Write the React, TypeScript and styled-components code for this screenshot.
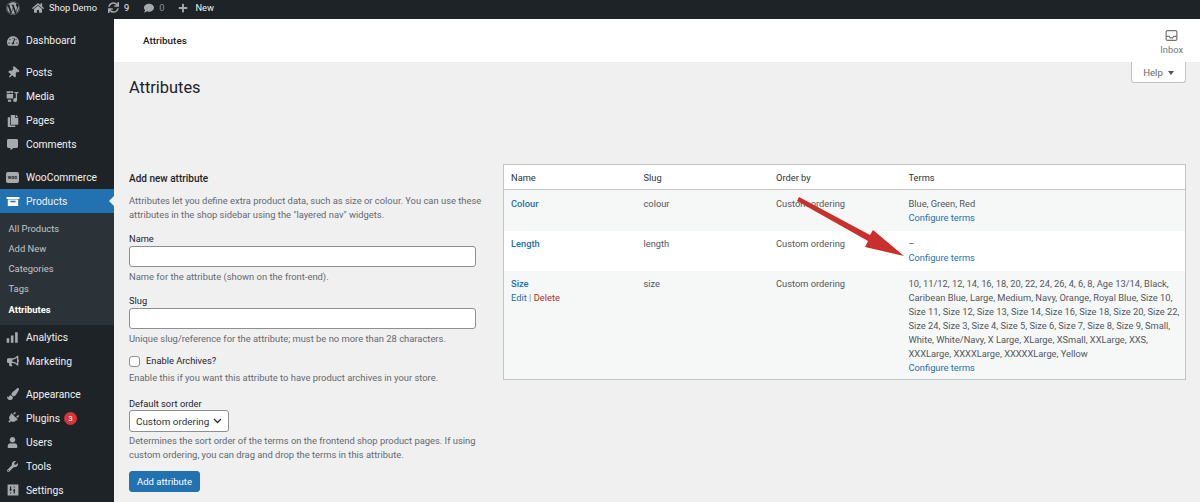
import React from 'react';
import styled, { createGlobalStyle } from 'styled-components';
import {
  FaWordpress, FaHome, FaSync, FaComment, FaPlus, FaTachometerAlt, FaThumbtack, FaCopy,
  FaCommentAlt, FaBullhorn, FaPaintBrush, FaPlug, FaUser, FaWrench,
} from 'react-icons/fa';

const Global = createGlobalStyle`
  html, body { margin: 0; padding: 0; height: 502px; overflow: hidden; background: #f0f0f1; }
  * { box-sizing: border-box; }
  body { font-family: Roboto, "Noto Sans", Arial, sans-serif; font-size: 10px; color: #3c434a; }
`;

const Page = styled.div`position: relative; width: 1200px; height: 502px; display: flex; flex-direction: column; overflow: hidden;`;

const AdminBar = styled.div`height: 19px; flex: none; background: #1d2327; color: #f0f0f1; display: flex; align-items: center; padding: 0 0 4px 6px; font-size: 9.300px;`;
const BarItem = styled.div<{ $gap?: number; $inner?: number; $dim?: boolean }>`display: flex; align-items: center; gap: ${p => p.$inner ?? 5}px; margin-right: ${p => p.$gap ?? 11}px; color: ${p => (p.$dim ? '#8c8f94' : '#f0f0f1')}; svg { color: #a7aaad; }`;

const Body = styled.div`flex: 1; display: flex; min-height: 0;`;

const Sidebar = styled.nav`width: 114px; flex: none; background: #1d2327; padding-top: 10px; display: flex; flex-direction: column;`;
const MenuItem = styled.div<{ $active?: boolean; $sep?: number }>`
  position: relative;
  height: 24.5px;
  margin-top: ${p => p.$sep ?? 0}px;
  display: flex;
  align-items: center;
  gap: 7px;
  padding-left: 6px;
  font-size: 10.300px;
  color: #f0f0f1;
  background: ${p => (p.$active ? '#2271b1' : 'transparent')};
  svg { color: ${p => (p.$active ? '#fff' : '#a7aaad')}; flex: none; }
  ${p => p.$active && `&::after { content: ''; position: absolute; right: 0; top: 7px; border: 5.5px solid transparent; border-right-color: #f0f0f1; border-left-width: 0; }`}
`;
const IconSlot = styled.span`width: 13px; height: 13px; flex: none; display: flex; align-items: center; justify-content: center;`;
const WooBadge = styled.span`width: 14px; height: 11px; border-radius: 2px; background: #a7aaad; color: #1d2327; font-size: 5px; font-weight: 700; display: flex; align-items: center; justify-content: center;`;
const Submenu = styled.div`background: #2c3338; padding: 5px 0 6px; display: flex; flex-direction: column;`;
const SubItem = styled.div<{ $current?: boolean }>`height: 20.2px; display: flex; align-items: center; padding-left: 8.500px; font-size: 9.400px; color: ${p => (p.$current ? '#fff' : '#c3c4c7')}; font-weight: ${p => (p.$current ? 700 : 400)};`;
const Count = styled.span`width: 13px; height: 13px; border-radius: 50%; background: #d63638; color: #fff; font-size: 8px; display: flex; align-items: center; justify-content: center; margin-left: -3px;`;

const Main = styled.main`flex: 1; min-width: 0; display: flex; flex-direction: column;`;
const Header = styled.header`height: 43px; flex: none; background: #fff; display: flex; align-items: center; justify-content: space-between; padding: 0 17px 0 29px;`;
const HeaderTitle = styled.div`font-size: 9.900px; font-weight: 500; color: #1d2327;`;
const Inbox = styled.div`display: flex; flex-direction: column; align-items: center; gap: 2px; color: #757575; font-size: 9.300px; padding-top: 2px;`;
const HelpRow = styled.div`height: 21px; flex: none; display: flex; justify-content: flex-end; padding-right: 14px;`;
const HelpTab = styled.div`width: 55px; height: 21px; background: #fff; border: 1px solid #c3c4c7; border-top: 0; border-radius: 0 0 3px 3px; display: flex; align-items: center; justify-content: center; gap: 5px; font-size: 9.600px; color: #646970; i { border: 3.5px solid transparent; border-top: 4.5px solid #50575e; border-bottom: 0; margin-top: 1px; }`;
const Content = styled.div`flex: 1; padding: 0 14px 0 15px; min-height: 0;`;
const H1 = styled.h1`margin: -6px 0 0; height: 87px; font-size: 16.400px; line-height: 22px; font-weight: 400; color: #1d2327;`;
const Columns = styled.div`display: flex; align-items: flex-start; gap: 27px;`;

const Form = styled.form`width: 347px; flex: none; padding-top: 8px;`;
const FormTitle = styled.h2`margin: 0 0 8px; font-size: 10px; line-height: 14px; font-weight: 500; color: #1d2327;`;
const Hint = styled.p<{ $top?: number }>`margin: ${p => p.$top ?? 0}px 0 0; font-size: 9.400px; line-height: 14px; color: #646970; white-space: nowrap;`;
const Field = styled.div<{ $top: number }>`margin-top: ${p => p.$top}px;`;
const Label = styled.label`display: block; font-size: 9.300px; line-height: 16px; color: #1d2327;`;
const TextInput = styled.div`height: 21px; margin-top: -1px; background: #fff; border: 1px solid #8c8f94; border-radius: 3px;`;
const CheckRow = styled.div`display: flex; align-items: center; gap: 6px; font-size: 9.300px; line-height: 14px; color: #1d2327;`;
const Check = styled.span`width: 11px; height: 11px; background: #fff; border: 1px solid #8c8f94; border-radius: 3px;`;
const Select = styled.div`width: 100px; height: 22px; margin-top: -2px; background: #fff; border: 1px solid #8c8f94; border-radius: 3px; display: flex; align-items: center; justify-content: space-between; padding: 0 6px; font-size: 9.900px; color: #2c3338; white-space: nowrap; svg { flex: none; }`;
const SubmitButton = styled.button`display: block; width: 71px; height: 21px; padding: 0; background: #2271b1; border: 1px solid #2271b1; border-radius: 3px; color: #fff; font: inherit; font-size: 9.500px;`;

const Table = styled.table`flex: 1; border-collapse: collapse; table-layout: fixed; width: 683px; border: 1px solid #c3c4c7; background: #fff; font-size: 9.300px; line-height: 14px;`;
const Th = styled.th<{ $w?: number }>`width: ${p => (p.$w ? `${p.$w}px` : 'auto')}; height: 25px; padding: 1px 7px 0; text-align: left; font-weight: 400; color: #2c3338; border-bottom: 1px solid #c3c4c7;`;
const Row = styled.tr<{ $alt?: boolean; $h: number }>`height: ${p => p.$h}px; background: ${p => (p.$alt ? '#f6f7f7' : '#fff')};`;
const Td = styled.td`padding: 6.500px 7px 0; vertical-align: top; color: #50575e;`;
const NameLink = styled.a`display: block; color: #2271b1; font-weight: 500;`;
const Link = styled.a`color: #2271b1;`;
const DeleteLink = styled.a`color: #b32d2e;`;
const Sep = styled.span`color: #8c8f94;`;
const TermLine = styled.div`white-space: nowrap;`;
const Arrow = styled.svg`position: absolute; left: 790px; top: 190px; pointer-events: none;`;

const Media = () => (
  <svg width="13" height="13" viewBox="0 0 20 20" fill="currentColor"><path d="M1 2h10v3H8.500L7 3.500 5.500 5H1zM1 6h10v7H1zM3 15h5v3H3zM13 3h6v2h-2v10.500a3 3 0 1 1-2-2.800V5h-2z" /></svg>
);
const Box = () => (
  <svg width="14" height="13" viewBox="0 0 20 20" fill="currentColor"><path d="M0 3h20v3H0zM2 7h16v10H2zM6 9v2h8V9z" fillRule="evenodd" /></svg>
);
const Bars = () => (
  <svg width="13" height="13" viewBox="0 0 20 20" fill="currentColor"><path d="M1 11h4v7H1zM7.500 7h4v11h-4zM14 2h4v16h-4z" /></svg>
);
const Sliders = () => (
  <svg width="12" height="12" viewBox="0 0 20 20" fill="currentColor"><path fillRule="evenodd" d="M1 1h18v18H1zM5 4v5H3.500L6 12l2.500-3H7V4zm0 10v2h2v-2zm8 2v-5h1.500L12 8 9.500 11H11v5zm0-10V4h-2v2z" /></svg>
);
const InboxIcon = () => (
  <svg width="13" height="13" viewBox="0 0 17 16" fill="none" stroke="#757575" strokeWidth="1.600"><rect x="1.500" y="1.500" width="14" height="13" rx="2" /><path d="M1.500 9h4l1.500 2h3l1.500-2h4" /></svg>
);
const Chevron = () => (
  <svg width="9" height="6" viewBox="0 0 9 6" fill="none" stroke="#2c3338" strokeWidth="1.300"><path d="M1 1l3.500 3.500L8 1" /></svg>
);

type Item = { label: string; icon: React.ReactNode; sep?: number; count?: number };

const topItems: Item[] = [
  { label: 'Dashboard', icon: <FaTachometerAlt size={12} /> },
  { label: 'Posts', icon: <FaThumbtack size={12} style={{ transform: 'rotate(40deg)' }} />, sep: 8 },
  { label: 'Media', icon: <Media /> },
  { label: 'Pages', icon: <FaCopy size={12} /> },
  { label: 'Comments', icon: <FaCommentAlt size={11} /> },
  { label: 'WooCommerce', icon: <WooBadge>woo</WooBadge>, sep: 8.5 },
];
const bottomItems: Item[] = [
  { label: 'Analytics', icon: <Bars /> },
  { label: 'Marketing', icon: <FaBullhorn size={12} /> },
  { label: 'Appearance', icon: <FaPaintBrush size={12} />, sep: 9 },
  { label: 'Plugins', icon: <FaPlug size={12} style={{ transform: 'rotate(45deg)' }} />, count: 3 },
  { label: 'Users', icon: <FaUser size={11} /> },
  { label: 'Tools', icon: <FaWrench size={11} /> },
  { label: 'Settings', icon: <Sliders /> },
];
const subItems = ['All Products', 'Add New', 'Categories', 'Tags', 'Attributes'];
const sizeTerms = [
  '10, 11/12, 12, 14, 16, 18, 20, 22, 24, 26, 4, 6, 8, Age 13/14, Black,',
  'Caribean Blue, Large, Medium, Navy, Orange, Royal Blue, Size 10,',
  'Size 11, Size 12, Size 13, Size 14, Size 16, Size 18, Size 20, Size 22,',
  'Size 24, Size 3, Size 4, Size 5, Size 6, Size 7, Size 8, Size 9, Small,',
  'White, White/Navy, X Large, XLarge, XSmall, XXLarge, XXS,',
  'XXXLarge, XXXXLarge, XXXXXLarge, Yellow',
];

const renderItem = (item: Item) => (
  <MenuItem key={item.label} $sep={item.sep}>
    <IconSlot>{item.icon}</IconSlot>
    {item.label}
    {item.count ? <Count>{item.count}</Count> : null}
  </MenuItem>
);

export default function App() {
  return (
    <Page>
      <Global />
      <AdminBar>
        <BarItem $gap={12}><FaWordpress size={14} /></BarItem>
        <BarItem $gap={11}><FaHome size={12} />Shop Demo</BarItem>
        <BarItem $gap={15}><FaSync size={11} />9</BarItem>
        <BarItem $gap={14} $dim><FaComment size={10} />0</BarItem>
        <BarItem $inner={7}><FaPlus size={10} />New</BarItem>
      </AdminBar>
      <Body>
        <Sidebar>
          {topItems.map(renderItem)}
          <MenuItem $active>
            <IconSlot><Box /></IconSlot>
            Products
          </MenuItem>
          <Submenu>
            {subItems.map(s => <SubItem key={s} $current={s === 'Attributes'}>{s}</SubItem>)}
          </Submenu>
          {bottomItems.map(renderItem)}
        </Sidebar>
        <Main>
          <Header>
            <HeaderTitle>Attributes</HeaderTitle>
            <Inbox><InboxIcon />Inbox</Inbox>
          </Header>
          <HelpRow><HelpTab>Help <i /></HelpTab></HelpRow>
          <Content>
            <H1>Attributes</H1>
            <Columns>
              <Form>
                <FormTitle>Add new attribute</FormTitle>
                <Hint>Attributes let you define extra product data, such as size or colour. You can use these</Hint>
                <Hint>attributes in the shop sidebar using the "layered nav" widgets.</Hint>
                <Field $top={9}>
                  <Label>Name</Label>
                  <TextInput />
                  <Hint $top={3}>Name for the attribute (shown on the front-end).</Hint>
                </Field>
                <Field $top={9}>
                  <Label>Slug</Label>
                  <TextInput />
                  <Hint $top={3}>Unique slug/reference for the attribute; must be no more than 28 characters.</Hint>
                </Field>
                <Field $top={8}>
                  <CheckRow><Check />Enable Archives?</CheckRow>
                  <Hint $top={3}>Enable this if you want this attribute to have product archives in your store.</Hint>
                </Field>
                <Field $top={11}>
                  <Label>Default sort order</Label>
                  <Select>Custom ordering <Chevron /></Select>
                  <Hint $top={2}>Determines the sort order of the terms on the frontend shop product pages. If using</Hint>
                  <Hint>custom ordering, you can drag and drop the terms in this attribute.</Hint>
                </Field>
                <Field $top={9}>
                  <SubmitButton type="button">Add attribute</SubmitButton>
                </Field>
              </Form>
              <Table>
                <thead>
                  <tr>
                    <Th $w={133}>Name</Th>
                    <Th $w={132.5}>Slug</Th>
                    <Th $w={132.5}>Order by</Th>
                    <Th>Terms</Th>
                  </tr>
                </thead>
                <tbody>
                  <Row $alt $h={41}>
                    <Td><NameLink>Colour</NameLink></Td>
                    <Td>colour</Td>
                    <Td>Custom ordering</Td>
                    <Td><TermLine>Blue, Green, Red</TermLine><Link>Configure terms</Link></Td>
                  </Row>
                  <Row $h={40}>
                    <Td><NameLink>Length</NameLink></Td>
                    <Td>length</Td>
                    <Td>Custom ordering</Td>
                    <Td><TermLine>–</TermLine><Link>Configure terms</Link></Td>
                  </Row>
                  <Row $alt $h={109}>
                    <Td>
                      <NameLink>Size</NameLink>
                      <Link>Edit</Link> <Sep>|</Sep> <DeleteLink>Delete</DeleteLink>
                    </Td>
                    <Td>size</Td>
                    <Td>Custom ordering</Td>
                    <Td>
                      {sizeTerms.map(t => <TermLine key={t}>{t}</TermLine>)}
                      <Link>Configure terms</Link>
                    </Td>
                  </Row>
                </tbody>
              </Table>
            </Columns>
          </Content>
        </Main>
      </Body>
      <Arrow width="120" height="70" viewBox="790 190 120 70">
        <path d="M797 201l2-4 71 38 3-5 31 26-39-9 3-6z" fill="#c9302c" />
      </Arrow>
    </Page>
  );
}
